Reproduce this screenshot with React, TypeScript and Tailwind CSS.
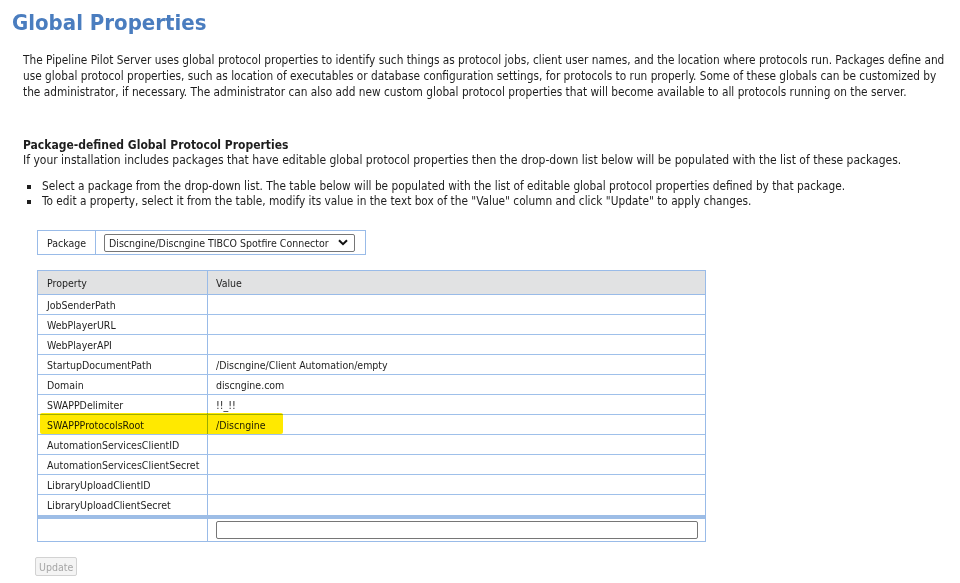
import React from 'react';

const rows: { name: string; value: string }[] = [
  { name: 'JobSenderPath', value: '' },
  { name: 'WebPlayerURL', value: '' },
  { name: 'WebPlayerAPI', value: '' },
  { name: 'StartupDocumentPath', value: '/Discngine/Client Automation/empty' },
  { name: 'Domain', value: 'discngine.com' },
  { name: 'SWAPPDelimiter', value: '!!_!!' },
  { name: 'SWAPPProtocolsRoot', value: '/Discngine' },
  { name: 'AutomationServicesClientID', value: '' },
  { name: 'AutomationServicesClientSecret', value: '' },
  { name: 'LibraryUploadClientID', value: '' },
  { name: 'LibraryUploadClientSecret', value: '' },
];

const ChevronDown = () => (
  <svg width="10" height="7" viewBox="0 0 10 7" className="shrink-0">
    <path d="M1 1.2 L5 5.2 L9 1.2" fill="none" stroke="#111" strokeWidth="2" />
  </svg>
);

export default function App() {
  return (
    <div
      className="min-h-[583px] bg-white text-[#1e1e1e] text-[11.75px] leading-[16px]"
      style={{ fontFamily: '"DejaVu Sans Condensed", "DejaVu Sans", sans-serif' }}
    >
      {/* Header */}
      <h1 className="pl-3 pt-[9px] text-[22px] leading-[28px] font-bold text-[#4a7dbf]">
        Global Properties
      </h1>

      {/* Intro */}
      <div className="pl-[23px] pr-[8px] mt-[15px]">
        <p>
          The Pipeline Pilot Server uses global protocol properties to identify such things as protocol jobs, client
          user names, and the location where protocols run. Packages define and use global protocol properties, such
          as location of executables or database configuration settings, for protocols to run properly. Some of these
          globals can be customized by the administrator, if necessary. The administrator can also add new custom
          global protocol properties that will become available to all protocols running on the server.
        </p>
        <h2 className="mt-[37px] font-bold text-[12px] leading-[16px]">Package-defined Global Protocol Properties</h2>
        <p className="leading-[15px] text-[12px]">
          If your installation includes packages that have editable global protocol properties then the drop-down list
          below will be populated with the list of these packages.
        </p>
        <ul className="mt-[11px] pl-[4px] leading-[15px]">
          <li className="flex items-center gap-[11px]">
            <span className="w-[4px] h-[4px] bg-[#1e1e1e] shrink-0" />
            <span>
              Select a package from the drop-down list. The table below will be populated with the list of editable
              global protocol properties defined by that package.
            </span>
          </li>
          <li className="flex items-center gap-[11px]">
            <span className="w-[4px] h-[4px] bg-[#1e1e1e] shrink-0" />
            <span>
              To edit a property, select it from the table, modify its value in the text box of the "Value" column and
              click "Update" to apply changes.
            </span>
          </li>
        </ul>
      </div>

      {/* Package selector */}
      <div className="ml-[37px] mt-[21px] w-[329px] h-[25px] border border-[#99bbe8] flex items-center text-[10.5px]">
        <div className="w-[58px] h-full border-r border-[#99bbe8] flex items-center pl-[9px]">Package</div>
        <div className="ml-[8px] w-[251px] h-[18px] border border-[#767676] rounded-[2px] flex items-center justify-between pl-[4px] pr-[6px] whitespace-nowrap">
          <span>Discngine/Discngine TIBCO Spotfire Connector</span>
          <ChevronDown />
        </div>
      </div>

      {/* Properties table */}
      <div className="relative ml-[37px] mt-[15px] w-[669px] border border-[#99bbe8] text-[10.5px] leading-[14px]">
        <div className="flex h-[24px] bg-[#e1e2e3] border-b border-[#99bbe8]">
          <div className="w-[170px] border-r border-[#99bbe8] flex items-center pl-[9px]">Property</div>
          <div className="flex-1 flex items-center pl-[8px]">Value</div>
        </div>
        {rows.map((row, i) => (
          <div
            key={row.name}
            className={`flex h-[20px] ${i === rows.length - 1 ? '' : 'border-b border-[#9fc0ea]'}`}
          >
            <div className="w-[170px] border-r border-[#99bbe8] flex items-center pl-[9px] whitespace-nowrap">{row.name}</div>
            <div className="flex-1 flex items-center pl-[8px]">{row.value}</div>
          </div>
        ))}
        <div className="h-[4px] bg-[#9dbde6]" />
        <div className="flex h-[22px]">
          <div className="w-[170px] border-r border-[#99bbe8]" />
          <div className="flex-1 flex items-center pl-[8px] pr-[7px]">
            <div className="w-full h-[18px] border border-[#767676] rounded-[2px] bg-white" />
          </div>
        </div>

        {/* marker highlight */}
        <span className="absolute left-[2px] top-[142px] w-[243px] h-[21px] bg-[#ffe900] mix-blend-multiply rounded-[2px]" />
      </div>

      {/* Update */}
      <button
        disabled
        className="ml-[35px] mt-[15px] h-[19px] px-[3px] border border-[#d2d2d2] rounded-[2px] bg-[#f4f4f4] text-[#a6a6a6] text-[10.5px] leading-[14px]"
      >
        Update
      </button>
    </div>
  );
}
